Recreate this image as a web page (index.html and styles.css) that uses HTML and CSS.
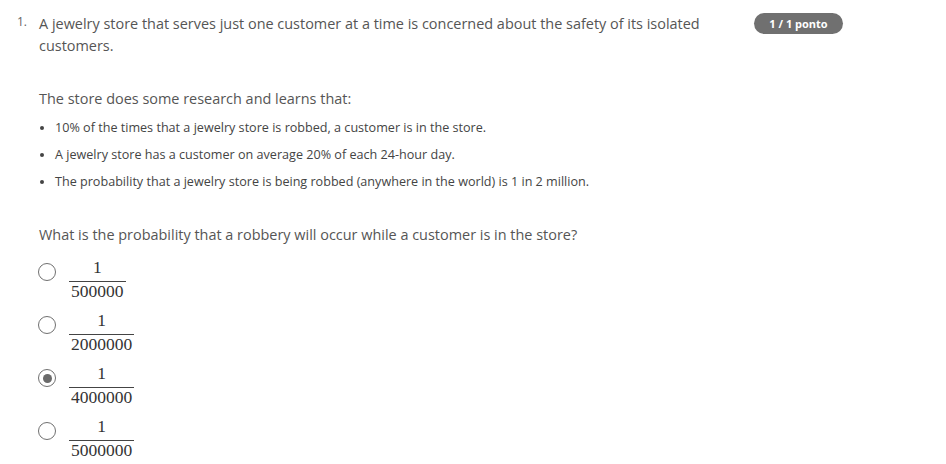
FILE: index.html
```html
<!DOCTYPE html>
<html>
<head>
<meta charset="utf-8">
<link rel="stylesheet" href="styles.css">
</head>
<body>
<div class="question">
  <div class="num">1.</div>
  <div class="content">
    <p class="lead">A jewelry store that serves just one customer at a time is concerned about the safety of its isolated customers.</p>
    <p class="intro">The store does some research and learns that:</p>
    <ul class="facts">
      <li>10% of the times that a jewelry store is robbed, a customer is in the store.</li>
      <li>A jewelry store has a customer on average 20% of each 24-hour day.</li>
      <li>The probability that a jewelry store is being robbed (anywhere in the world) is 1 in 2 million.</li>
    </ul>
    <p class="ask">What is the probability that a robbery will occur while a customer is in the store?</p>
    <div class="options">
      <div class="option">
        <span class="radio"></span>
        <span class="frac"><span class="n">1</span><span class="d">500000</span></span>
      </div>
      <div class="option">
        <span class="radio"></span>
        <span class="frac"><span class="n">1</span><span class="d">2000000</span></span>
      </div>
      <div class="option">
        <span class="radio checked"></span>
        <span class="frac"><span class="n">1</span><span class="d">4000000</span></span>
      </div>
      <div class="option">
        <span class="radio"></span>
        <span class="frac"><span class="n">1</span><span class="d">5000000</span></span>
      </div>
    </div>
  </div>
  <div class="badge">1 / 1 ponto</div>
</div>
</body>
</html>
```
FILE: styles.css
```css
html, body {
  margin: 0;
  padding: 0;
  background: #ffffff;
}
body {
  font-family: "Open Sans", "Liberation Sans", sans-serif;
  color: #555555;
}
.question {
  display: flex;
  align-items: flex-start;
  padding: 13px 0 0 17px;
}
.num {
  width: 22px;
  font-size: 12px;
  line-height: 18px;
  color: #666666;
}
.content {
  width: 694px;
}
.lead {
  margin: 0;
  font-size: 14.45px;
  line-height: 22px;
}
.intro {
  margin: 31px 0 0;
  font-size: 14.45px;
  line-height: 22px;
}
.facts {
  margin: 9px 0 0;
  padding: 0 0 0 16px;
  font-size: 12.6px;
  line-height: 18px;
  color: #444444;
}
.facts li {
  margin: 0 0 9px;
}
.ask {
  margin: 33px 0 0;
  font-size: 14.45px;
  line-height: 22px;
}
.options {
  margin-top: 12px;
  display: flex;
  flex-direction: column;
  gap: 6px;
}
.option {
  display: flex;
  align-items: flex-start;
  height: 47px;
}
.radio {
  box-sizing: border-box;
  width: 18px;
  height: 18px;
  border: 1.6px solid #707070;
  border-radius: 50%;
  margin: 5px 0 0 -1px;
  display: flex;
  align-items: center;
  justify-content: center;
}
.radio.checked::after {
  content: "";
  width: 9px;
  height: 9px;
  border-radius: 50%;
  background: #6a6a6a;
}
.frac {
  margin-left: 13px;
  display: inline-flex;
  flex-direction: column;
  align-items: stretch;
  font-family: "Liberation Serif", "Times New Roman", serif;
  font-size: 17.5px;
  color: #333333;
  text-align: center;
}
.frac .n {
  line-height: 19px;
  padding-bottom: 4px;
  border-bottom: 1px solid #444444;
}
.frac .d {
  line-height: 19px;
  padding: 0 2px;
}
.badge {
  margin-left: 21px;
  margin-top: 0;
  width: 89px;
  height: 21px;
  border-radius: 11px;
  background: #707070;
  color: #ffffff;
  font-size: 11px;
  font-weight: 700;
  line-height: 21px;
  text-align: center;
}
```
